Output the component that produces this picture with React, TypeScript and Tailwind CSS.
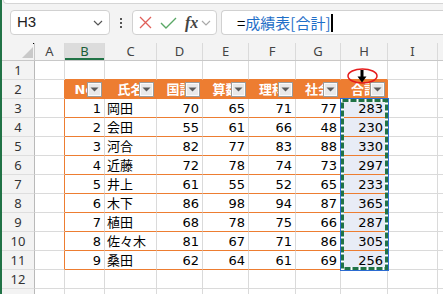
import React from "react";

const cols = [
  { key: "A", w: "w-[30px]" },
  { key: "B", w: "w-[40px]" },
  { key: "C", w: "w-[52px]" },
  { key: "D", w: "w-[46px]" },
  { key: "E", w: "w-[46px]" },
  { key: "F", w: "w-[47px]" },
  { key: "G", w: "w-[45px]" },
  { key: "H", w: "w-[47px]" },
  { key: "I", w: "w-[50px]" },
  { key: "", w: "w-[50px]" },
];

const headers = ["No", "氏名", "国語", "算数", "理科", "社会", "合計"];

const rows: (string | number)[][] = [
  [1, "岡田", 70, 65, 71, 77, 283],
  [2, "会田", 55, 61, 66, 48, 230],
  [3, "河合", 82, 77, 83, 88, 330],
  [4, "近藤", 72, 78, 74, 73, 297],
  [5, "井上", 61, 55, 52, 65, 233],
  [6, "木下", 86, 98, 94, 87, 365],
  [7, "植田", 68, 78, 75, 66, 287],
  [8, "佐々木", 81, 67, 71, 86, 305],
  [9, "桑田", 62, 64, 61, 69, 256],
];

const sheetFont = { fontFamily: "'DejaVu Sans','Noto Sans CJK JP',sans-serif" };

function FilterButton() {
  return (
    <div className="absolute right-[2px] top-[2px] w-[15px] h-[15px] bg-[#e9e9e9] border border-[#9a9a9a] shadow-[inset_0_0_0_1px_#fbfbfb] flex items-center justify-center">
      <svg width="9" height="5" viewBox="0 0 9 5">
        <polygon points="0.5,0.5 8.5,0.5 4.5,4.5" fill="#5a5a5a" />
      </svg>
    </div>
  );
}

function Cell({ r, ci }: { r: number; ci: number }) {
  const col = cols[ci];
  const inTable = ci >= 1 && ci <= 7;
  const ti = ci - 1;

  if (r === 2 && inTable) {
    return (
      <div
        className={`${col.w} shrink-0 h-full relative border-b border-r border-[#ED7D31] bg-[#ED7D31] flex items-center justify-center text-white font-bold text-[13px] leading-none overflow-hidden whitespace-nowrap`}
      >
        {headers[ti]}
        <FilterButton />
      </div>
    );
  }

  if (r >= 3 && r <= 11 && inTable) {
    const v = rows[r - 3][ti];
    const isName = ti === 1;
    const sel = ci === 7;
    return (
      <div
        className={`${col.w} shrink-0 h-full border-b border-r border-b-[#ED7D31] ${
          sel ? "border-r-[#ED7D31] bg-[#e8ecf6] pr-[4px]" : "border-r-[#dadada] bg-white pr-[3px]"
        } flex items-center ${isName ? "justify-start pl-[2px]" : "justify-end"} text-[13px] text-black leading-none whitespace-nowrap`}
      >
        {v}
      </div>
    );
  }

  const orangeBottom = r === 1 && inTable;
  const orangeRight = ci === 0 && r >= 2 && r <= 11;
  return (
    <div
      className={`${col.w} shrink-0 h-full bg-white border-b border-r ${
        orangeBottom ? "border-b-[#ED7D31]" : "border-b-[#dadada]"
      } ${orangeRight ? "border-r-[#ED7D31]" : "border-r-[#dadada]"}`}
    />
  );
}

function NameBox() {
  return (
    <div className="w-[100px] h-[25px] bg-white border border-[#d1d1d1] rounded-[4px] flex items-center justify-between pl-[6px] pr-[6px]">
      <span className="text-[15px] text-[#222]" style={{ fontFamily: "'Liberation Sans',sans-serif" }}>
        H3
      </span>
      <svg width="10" height="6" viewBox="0 0 10 6">
        <polyline points="1,1 5,5 9,1" fill="none" stroke="#555" strokeWidth="1.2" />
      </svg>
    </div>
  );
}

function FormulaIcons() {
  return (
    <div className="w-[85px] h-[25px] bg-white border border-[#d1d1d1] rounded-[4px] flex items-center pl-[6px] gap-[8px]">
      <svg width="13" height="13" viewBox="0 0 13 13">
        <path d="M1 1 L12 12 M12 1 L1 12" stroke="#e0605a" strokeWidth="1.3" />
      </svg>
      <svg width="17" height="12" viewBox="0 0 17 12">
        <polyline points="1,6 6,11 16,1" fill="none" stroke="#5aa866" strokeWidth="1.4" />
      </svg>
      <div className="flex items-center gap-[3px]">
        <span
          className="text-[16px] italic font-bold text-[#444] leading-none"
          style={{ fontFamily: "'Liberation Serif',serif" }}
        >
          fx
        </span>
        <svg width="10" height="6" viewBox="0 0 10 6">
          <polyline points="1,1 5,5 9,1" fill="none" stroke="#aaa" strokeWidth="1.2" />
        </svg>
      </div>
    </div>
  );
}

export default function App() {
  return (
    <div className="w-[443px] h-[294px] overflow-hidden bg-[#f3f3f3] relative flex">
      <div className="w-[2px] shrink-0 bg-[#217346]" />
      <div className="flex-1 flex flex-col min-w-0 overflow-hidden">
        {/* ribbon edge */}
        <div className="h-[4px] shrink-0 bg-white border-b border-l border-[#d5d5d5] rounded-bl-[5px] ml-[1px]" />

        {/* formula bar */}
        <div className="h-[39px] shrink-0 flex items-start pt-[6px] pl-[8px]">
          <NameBox />
          <div className="w-[22px] h-[25px] flex flex-col items-center justify-center gap-[2px]">
            <div className="w-[2px] h-[2px] bg-[#555]" />
            <div className="w-[2px] h-[2px] bg-[#555]" />
            <div className="w-[2px] h-[2px] bg-[#555]" />
          </div>
          <FormulaIcons />
          <div className="ml-[4px] flex-1 h-[25px] bg-white border border-r-0 border-[#d1d1d1] rounded-l-[4px] flex items-center pl-[15px]">
            <span className="text-[15px] leading-none whitespace-nowrap" style={{ fontFamily: "'Noto Sans CJK JP',sans-serif" }}>
              <span className="text-black">=</span>
              <span className="text-[#1f6fc8]">成績表[合計]</span>
            </span>
            <div className="w-[2px] h-[18px] bg-black ml-[1px]" />
          </div>
        </div>

        {/* column headers */}
        <div className="h-[18px] shrink-0 flex border-b border-[#c8c8c8]" style={{ fontFamily: "'Noto Sans',sans-serif" }}>
          <div className="w-[33px] shrink-0 h-full relative border-r border-[#c8c8c8]">
            <svg className="absolute left-[20px] top-[4px]" width="11" height="11" viewBox="0 0 11 11">
              <polygon points="11,0 11,11 0,11" fill="#c9c9c9" />
            </svg>
            <div className="absolute right-0 top-0 w-[1px] h-[1px] bg-black" />
          </div>
          {cols.map((c, ci) => (
            <div
              key={ci}
              className={`${c.w} shrink-0 h-full border-r border-[#dadada] flex items-center justify-center text-[13px] leading-none ${
                c.key === "B"
                  ? "bg-[#dcdcdc] text-[#1a5c36] shadow-[inset_0_-2px_0_#217346]"
                  : "text-[#444]"
              }`}
            >
              {c.key}
            </div>
          ))}
        </div>

        {/* rows */}
        <div className="flex flex-col" style={sheetFont}>
          {Array.from({ length: 13 }, (_, i) => i + 1).map((r) => (
            <div key={r} className="flex h-[19px] shrink-0">
              <div
                className="w-[33px] shrink-0 h-full bg-[#f3f3f3] border-r border-b border-r-[#b9b9b9] border-b-[#dedede] flex items-center justify-center text-[13px] text-[#333] leading-none"
                style={{ fontFamily: "'Noto Sans',sans-serif" }}
              >
                {r <= 12 ? r : ""}
              </div>
              {cols.map((c, ci) => (
                <Cell key={ci} r={r} ci={ci} />
              ))}
            </div>
          ))}
        </div>
      </div>

      {/* selection H3:H11 with copy marquee */}
      <svg className="absolute left-[340px] top-[98px] pointer-events-none" width="49" height="173" viewBox="0 0 49 173">
        <rect x="0.5" y="0.5" width="48" height="172" fill="none" stroke="#2b6bd1" strokeWidth="1" />
        <rect x="2.5" y="2.5" width="44" height="168" fill="none" stroke="#ffffff" strokeWidth="3" />
        <rect x="2.5" y="2.5" width="44" height="168" fill="none" stroke="#217346" strokeWidth="3" strokeDasharray="6 2" />
      </svg>

      {/* red ellipse with column-select cursor */}
      <svg className="absolute left-[346px] top-[67px] pointer-events-none" width="33" height="19" viewBox="0 0 33 19">
        <ellipse cx="16.5" cy="9" rx="14.5" ry="7" fill="none" stroke="#e51c1c" strokeWidth="1.5" />
        <rect x="14.5" y="3" width="3" height="7" fill="#000" />
        <polygon points="11.5,9.5 20.5,9.5 16,15.5" fill="#000" />
      </svg>
    </div>
  );
}
